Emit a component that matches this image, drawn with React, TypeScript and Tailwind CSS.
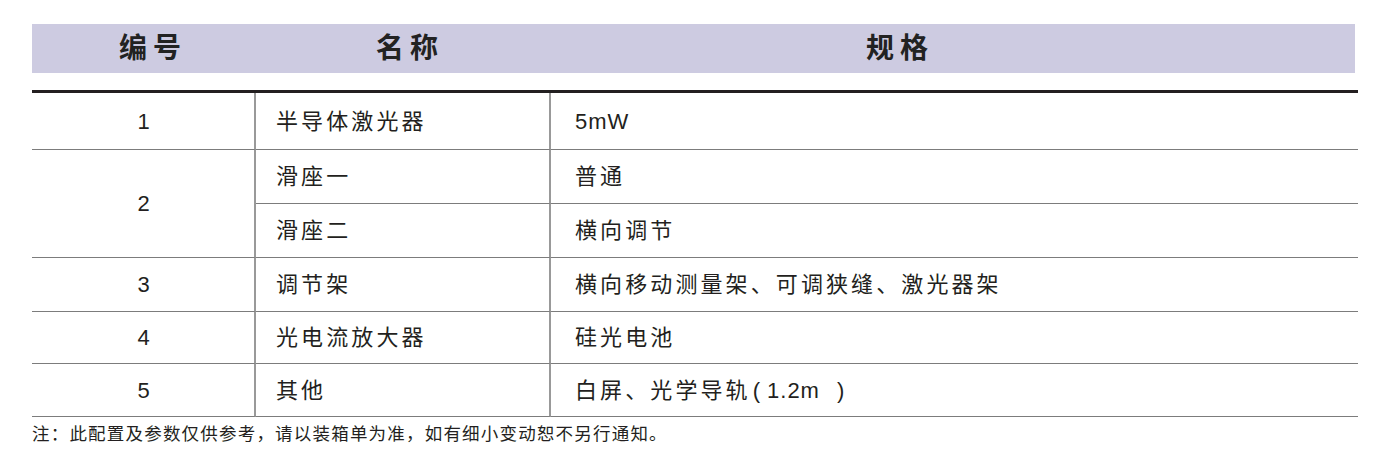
import type { ReactNode } from "react";

const font = { fontFamily: '"Liberation Sans", "Noto Sans CJK SC", sans-serif' };

// latin runs are set in an Arial-width face next to the CJK text
const Latin = ({ children }: { children: ReactNode }) => (
  <span className="text-[22px] tracking-[1px]">{children}</span>
);

const rows: { no: string; name: string; spec: ReactNode }[] = [
  { no: "1", name: "半导体激光器", spec: <Latin>5mW</Latin> },
  { no: "2", name: "滑座一", spec: "普通" },
  { no: "", name: "滑座二", spec: "横向调节" },
  { no: "3", name: "调节架", spec: "横向移动测量架、可调狭缝、激光器架" },
  { no: "4", name: "光电流放大器", spec: "硅光电池" },
  {
    no: "5",
    name: "其他",
    spec: (
      <>
        白屏、光学导轨
        <Latin>
          <span className="ml-[2px]">(</span>
          <span className="ml-[6px]">1.2m</span>
          <span className="ml-[17px]">)</span>
        </Latin>
      </>
    ),
  },
];

const cell = "flex items-center border-b border-[#7c7c7c]";

export default function App() {
  return (
    <div className="w-[1390px] h-[474px] bg-white text-[#231f20] pt-[24px] pl-[32px]" style={font}>
      {/* header band */}
      <div className="w-[1323px] h-[49px] bg-[#cdcbe1] flex items-center pl-[87px] text-[28px] font-bold tracking-[6px] text-[#222]">
        <span>编号</span>
        <span className="ml-[189px]">名称</span>
        <span className="ml-[422px]">规格</span>
      </div>

      <div className="w-[1326px] h-[3px] bg-[#231f20] mt-[17px]" />

      <div className="w-[1326px] grid grid-cols-[224px_295px_1fr] grid-rows-[57px_54px_54px_54px_52px_53px] text-[22px] tracking-[3.1px]">
        {rows.map((r, i) => (
          <div key={i} className="contents">
            {i === 1 && (
              <div className={`${cell} row-span-2 justify-center pl-[2px] border-r-2 border-r-[#999]`}>
                <Latin>{r.no}</Latin>
              </div>
            )}
            {i !== 1 && i !== 2 && (
              <div className={`${cell} justify-center pl-[2px] border-r-2 border-r-[#999]`}>
                <Latin>{r.no}</Latin>
              </div>
            )}
            <div className={`${cell} pl-[20px] border-r-2 border-r-[#999]`}>{r.name}</div>
            <div className={`${cell} pl-[24px]`}>{r.spec}</div>
          </div>
        ))}
      </div>

      <p className="mt-[5px] text-[17.5px] leading-[24px] tracking-[1.2px]">
        注：此配置及参数仅供参考，请以装箱单为准，如有细小变动恕不另行通知。
      </p>
    </div>
  );
}
